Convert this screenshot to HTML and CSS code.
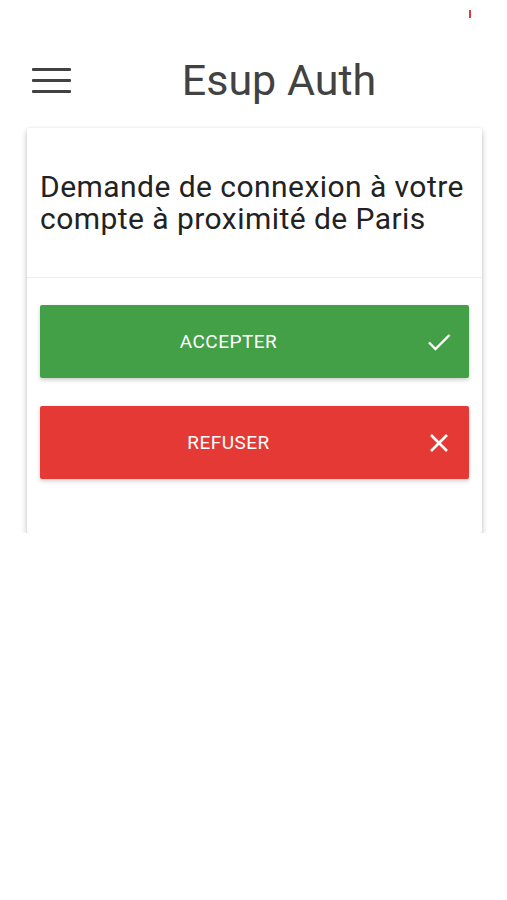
FILE: index.html
```html
<!DOCTYPE html>
<html lang="fr">
<head>
    <meta charset="UTF-8">
    <meta name="viewport" content="width=device-width, initial-scale=1.0">
    <title>Esup Auth</title>
    <link rel="stylesheet" href="styles.css">
</head>
<body>
    <div class="statusbar">
        <span class="status-mark"></span>
    </div>
    <header class="toolbar">
        <button class="menu-btn" aria-label="Menu">
            <span></span>
            <span></span>
            <span></span>
        </button>
        <h1 class="title">Esup Auth</h1>
    </header>

    <div class="card">
        <div class="card-header">
            Demande de connexion à votre compte à proximité de Paris
        </div>
        <div class="card-content">
            <button class="action accept">
                <span class="label">ACCEPTER</span>
                <span class="icon">
                    <svg viewBox="0 0 24 24" width="24" height="24">
                        <polyline points="2,12.5 8.5,19 22.5,5" fill="none" stroke="#fff" stroke-width="2.4"/>
                    </svg>
                </span>
            </button>
            <button class="action refuse">
                <span class="label">REFUSER</span>
                <span class="icon">
                    <svg viewBox="0 0 24 24" width="24" height="24">
                        <path d="M4 4L20 20M20 4L4 20" fill="none" stroke="#fff" stroke-width="2.6"/>
                    </svg>
                </span>
            </button>
        </div>
    </div>
</body>
</html>
```

FILE: styles.css
```css
body {
    margin: 0;
    background-color: #fff;
    font-family: Roboto, "Noto Sans", Arial, sans-serif;
    color: #222;
}
.statusbar {
    height: 40px;
    display: flex;
    justify-content: flex-end;
    padding-right: 36px;
}
.status-mark {
    width: 2px;
    height: 8px;
    margin-top: 10px;
    background-color: #e53935;
}
.toolbar {
    height: 80px;
    display: flex;
    align-items: center;
    padding-left: 32px;
    padding-right: 20px;
}
.menu-btn {
    width: 39px;
    padding: 0;
    border: none;
    background: none;
    display: flex;
    flex-direction: column;
    gap: 8px;
}
.menu-btn span {
    display: block;
    height: 3px;
    background-color: #424242;
    border-radius: 1px;
}
.title {
    flex: 1;
    margin: 0;
    text-align: center;
    font-size: 43px;
    line-height: 44px;
    font-weight: 400;
    color: #424242;
}
.card {
    margin: 8px 25px 0 27px;
    background-color: #fff;
    border-radius: 2px;
    box-shadow: 0 3px 6px rgba(0, 0, 0, 0.24), 0 0 2px rgba(0, 0, 0, 0.08);
}
.card-header {
    padding: 43px 13px 42px;
    font-size: 30px;
    line-height: 32px;
    letter-spacing: 0.45px;
    color: #222;
    border-bottom: 1px solid #eee;
}
.card-content {
    padding: 27px 13px 54px;
    display: flex;
    flex-direction: column;
    gap: 28px;
}
.action {
    height: 73px;
    border: none;
    border-radius: 2px;
    padding: 0;
    display: flex;
    align-items: center;
    font-family: Roboto, "Noto Sans", Arial, sans-serif;
    font-size: 19px;
    letter-spacing: 0.5px;
    color: #fff;
    box-shadow: 0 2px 4px rgba(0, 0, 0, 0.2);
}
.action .label {
    flex: 1;
    text-align: center;
}
.action .icon {
    width: 52px;
    display: flex;
    justify-content: flex-end;
    padding-right: 18px;
    box-sizing: border-box;
}
.accept {
    background-color: #43a047;
}
.refuse {
    background-color: #e53935;
}
```
